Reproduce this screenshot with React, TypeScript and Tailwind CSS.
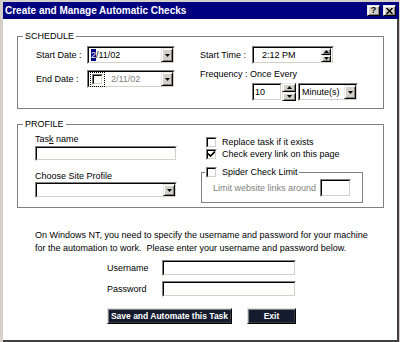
import React from "react";

const SANS = "font-['Liberation_Sans',Arial,sans-serif]";

type P = { className?: string; children?: React.ReactNode };

function Sunken({ className = "", children }: P) {
  return (
    <div className={`border border-t-[#808080] border-l-[#808080] border-b-white border-r-white ${className}`}>
      <div className="flex h-full w-full items-center border border-t-black border-l-black border-b-[#d4d0c8] border-r-[#d4d0c8] bg-white">
        {children}
      </div>
    </div>
  );
}

function Raised({ className = "", children }: P) {
  return (
    <div
      className={`flex items-center justify-center border border-t-[#e8e8e8] border-l-[#e8e8e8] border-b-black border-r-black bg-[#d4d0c8] shadow-[inset_1px_1px_0_#ffffff,inset_-1px_-1px_0_#808080] ${className}`}
    >
      {children}
    </div>
  );
}

function Down() {
  return (
    <svg width="5" height="3" viewBox="0 0 5 3">
      <path d="M0 0h5L2.5 3z" fill="#000" />
    </svg>
  );
}
function Up() {
  return (
    <svg width="5" height="3" viewBox="0 0 5 3">
      <path d="M0 3h5L2.5 0z" fill="#000" />
    </svg>
  );
}

function Combo({ className = "", children }: P) {
  return (
    <Sunken className={className}>
      <div className="flex min-w-0 flex-1 items-center">{children}</div>
      <Raised className="h-full w-[12px]">
        <Down />
      </Raised>
    </Sunken>
  );
}

function Spin({ className = "" }: P) {
  return (
    <div className={`flex flex-col ${className}`}>
      <Raised className="flex-1">
        <Up />
      </Raised>
      <Raised className="flex-1">
        <Down />
      </Raised>
    </div>
  );
}

function CheckBox({ checked = false }: { checked?: boolean }) {
  return (
    <Sunken className="h-[11px] w-[11px] shrink-0">
      {checked && (
        <svg width="7" height="7" viewBox="0 0 7 7">
          <path d="M0 2.5L2.5 5L7 0.5" stroke="#000" strokeWidth="1.6" fill="none" />
        </svg>
      )}
    </Sunken>
  );
}

function Group({ title, className = "", children }: { title: React.ReactNode; className?: string; children?: React.ReactNode }) {
  return (
    <div className={`relative border border-[#808080] ${className}`}>
      <div className="absolute left-[5px] top-[-7px] bg-white px-[2px] leading-[12px]">{title}</div>
      {children}
    </div>
  );
}

function DarkButton({ className = "", children }: P) {
  return (
    <div
      className={`flex items-center justify-center border border-t-[#e0e0e0] border-l-[#e0e0e0] border-b-black border-r-black bg-[#161c30] text-[8.5px] font-bold text-white shadow-[inset_1px_1px_0_#808080,inset_-1px_-1px_0_#3a3a3a] ${className}`}
    >
      {children}
    </div>
  );
}

export default function App() {
  return (
    <div
      className={`flex h-[342px] w-[400px] flex-col whitespace-nowrap bg-[#d4d0c8] pl-[3px] pr-[1px] pt-[2px] text-[9px] leading-[12px] text-black ${SANS}`}
    >
      <div className="flex h-[17px] shrink-0 items-center bg-[#000080] pl-[2px] pr-[3px]">
        <span className="text-[10px] font-bold text-white">Create and Manage Automatic Checks</span>
        <div className="ml-auto flex gap-[3px]">
          <Raised className="h-[11px] w-[13px]">
            <span className="text-[9px] font-bold leading-[9px]">?</span>
          </Raised>
          <Raised className="h-[11px] w-[13px]">
            <svg width="7" height="6" viewBox="0 0 7 6">
              <path d="M0.5 0L6.5 6M6.5 0L0.5 6" stroke="#000" strokeWidth="1.5" />
            </svg>
          </Raised>
        </div>
      </div>

      <div className="flex flex-1 flex-col border-b-2 border-r-2 border-[#404040] bg-white">
        {/* SCHEDULE */}
        <Group title="SCHEDULE" className="ml-[14px] mt-[17px] h-[73px] w-[367px] shrink-0">
          <div className="flex pl-[18px] pt-[9px]">
            <div className="flex w-[164px] flex-col">
              <div className="flex h-[18px] items-center">
                <span className="w-[51px]">Start Date :</span>
                <Combo className="h-[18px] w-[88px]">
                  <span className="ml-[2px] bg-[#000080] text-white">2</span>
                  <span>/11/02</span>
                </Combo>
              </div>
              <div className="mt-[6px] flex h-[18px] items-center">
                <span className="w-[51px]">End Date :</span>
                <Combo className="h-[18px] w-[88px]">
                  <div className="ml-[1px] border border-dotted border-black p-[1px]">
                    <CheckBox />
                  </div>
                  <span className="ml-[6px] text-[#808080]">2/11/02</span>
                </Combo>
              </div>
            </div>
            <div className="flex flex-col">
              <div className="flex h-[18px] items-center">
                <span className="w-[52px]">Start Time :</span>
                <Sunken className="h-[18px] w-[82px]">
                  <span className="flex-1 pl-[8px]">2:12 PM</span>
                  <Spin className="mr-[1px] h-[14px] w-[10px]" />
                </Sunken>
              </div>
              <div className="mt-[4px]">Frequency : Once Every</div>
              <div className="mt-[3px] flex h-[18px] items-center pl-[52px]">
                <Sunken className="h-[18px] w-[30px]">
                  <span className="pl-[1px]">10</span>
                </Sunken>
                <Spin className="h-[18px] w-[14px]" />
                <Combo className="ml-[2px] h-[18px] w-[60px]">
                  <span className="pl-[2px]">Minute(s)</span>
                </Combo>
              </div>
            </div>
          </div>
        </Group>

        {/* PROFILE */}
        <Group title="PROFILE" className="ml-[14px] mt-[15px] h-[84px] w-[367px] shrink-0">
          <div className="flex pl-[17px]">
            <div className="flex w-[142px] flex-col pt-[8px]">
              <div>
                Tas<u>k</u> name
              </div>
              <Sunken className="mt-[1px] h-[15px] w-full" />
              <div className="mt-[9px]">Choose Site Profile</div>
              <Combo className="h-[16px] w-full" />
            </div>
            <div className="ml-[24px] flex flex-col pt-[11px]">
              <div className="flex h-[12px] items-center">
                <div className="ml-[5px]">
                  <CheckBox />
                </div>
                <span className="ml-[5px]">Replace task if it exists</span>
              </div>
              <div className="flex h-[12px] items-center">
                <div className="ml-[5px]">
                  <CheckBox checked />
                </div>
                <span className="ml-[5px]">Check every link on this page</span>
              </div>
              <div className="relative mt-[12px] h-[31px] w-[162px] border border-[#808080]">
                <div className="absolute left-[3px] top-[-7px] flex items-center bg-white px-[1px] leading-[12px]">
                  <CheckBox />
                  <span className="ml-[5px]">Spider Check Limit</span>
                </div>
                <div className="mt-[6px] flex h-[18px] items-center pl-[11px]">
                  <span className="text-[#808080]">Limit website links around</span>
                  <Sunken className="ml-[4px] h-[18px] w-[31px]" />
                </div>
              </div>
            </div>
          </div>
        </Group>

        <div className="ml-[32px] mt-[21px] whitespace-pre leading-[13px]">
          {"On Windows NT, you need to specify the username and password for your machine\nfor the automation to work.  Please enter your username and password below."}
        </div>

        <div className="ml-[104px] mt-[5px] flex h-[16px] items-center">
          <span className="w-[55px]">Username</span>
          <Sunken className="h-[16px] w-[134px]" />
        </div>
        <div className="ml-[104px] mt-[5px] flex h-[16px] items-center">
          <span className="w-[55px]">Password</span>
          <Sunken className="h-[16px] w-[134px]" />
        </div>

        <div className="ml-[104px] mt-[11px] flex">
          <DarkButton className="h-[16px] w-[125px]">Save and Automate this Task</DarkButton>
          <DarkButton className="ml-[15px] h-[16px] w-[49px]">Exit</DarkButton>
        </div>
      </div>
    </div>
  );
}
